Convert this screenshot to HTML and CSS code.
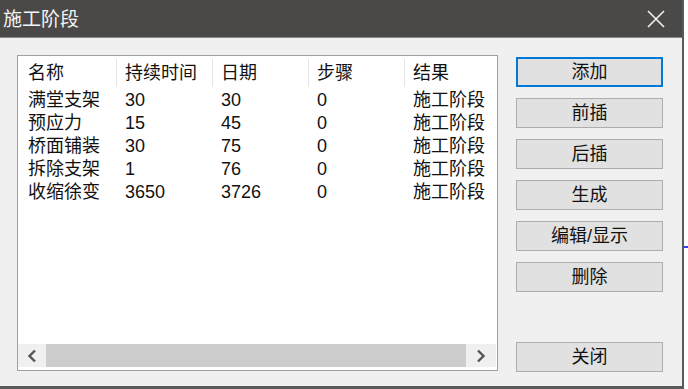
FILE: index.html
```html
<!DOCTYPE html>
<html lang="zh-CN">

<head>
    <meta charset="UTF-8">
    <meta name="viewport" content="width=device-width, initial-scale=1.0">
    <title>施工阶段</title>
    <link rel="stylesheet" href="styles.css">
</head>

<body>
    <div class="screen">
        <div class="dialog">
            <div class="titlebar">
                <span class="title">施工阶段</span>
                <svg class="closeIcon" width="18" height="18" viewBox="0 0 18 18">
                    <path d="M1 1 L17 17 M17 1 L1 17" stroke="#f2f2f2" stroke-width="1.6" fill="none" />
                </svg>
            </div>

            <div class="content">
                <div class="listBox">
                    <div class="row header">
                        <div class="cell">名称</div>
                        <div class="cell">持续时间</div>
                        <div class="cell">日期</div>
                        <div class="cell">步骤</div>
                        <div class="cell">结果</div>
                    </div>
                    <div class="rows">
                        <div class="row">
                            <div class="cell">满堂支架</div>
                            <div class="cell">30</div>
                            <div class="cell">30</div>
                            <div class="cell">0</div>
                            <div class="cell">施工阶段</div>
                        </div>
                        <div class="row">
                            <div class="cell">预应力</div>
                            <div class="cell">15</div>
                            <div class="cell">45</div>
                            <div class="cell">0</div>
                            <div class="cell">施工阶段</div>
                        </div>
                        <div class="row">
                            <div class="cell">桥面铺装</div>
                            <div class="cell">30</div>
                            <div class="cell">75</div>
                            <div class="cell">0</div>
                            <div class="cell">施工阶段</div>
                        </div>
                        <div class="row">
                            <div class="cell">拆除支架</div>
                            <div class="cell">1</div>
                            <div class="cell">76</div>
                            <div class="cell">0</div>
                            <div class="cell">施工阶段</div>
                        </div>
                        <div class="row">
                            <div class="cell">收缩徐变</div>
                            <div class="cell">3650</div>
                            <div class="cell">3726</div>
                            <div class="cell">0</div>
                            <div class="cell">施工阶段</div>
                        </div>
                    </div>

                    <div class="scrollbar">
                        <div class="arrowBtn left">
                            <svg width="10" height="14" viewBox="0 0 10 14">
                                <path d="M8 1.5 L2.5 7 L8 12.5" stroke="#555" stroke-width="2.4" fill="none" />
                            </svg>
                        </div>
                        <div class="track"></div>
                        <div class="arrowBtn right">
                            <svg width="10" height="14" viewBox="0 0 10 14">
                                <path d="M2 1.5 L7.5 7 L2 12.5" stroke="#555" stroke-width="2.4" fill="none" />
                            </svg>
                        </div>
                    </div>
                </div>

                <div class="buttons">
                    <button class="default">添加</button>
                    <button>前插</button>
                    <button>后插</button>
                    <button>生成</button>
                    <button>编辑/显示</button>
                    <button>删除</button>
                    <button class="close">关闭</button>
                </div>
            </div>
        </div>

        <div class="sideStrip">
            <div class="blueLine"></div>
        </div>
    </div>
</body>

</html>
```

FILE: styles.css
```css
* {
    box-sizing: border-box;
    font-family: "Liberation Sans", "Noto Sans CJK SC", sans-serif;
}

body {
    margin: 0;
    background-color: #ffffff;
}

.screen {
    display: flex;
    width: 688px;
    height: 389px;
}

.dialog {
    width: 684px;
    height: 389px;
    display: flex;
    flex-direction: column;
    background-color: #f0f0f0;
    border-right: 2px solid #5a5a5a;
    border-bottom: 3px solid #5a5a5a;
}

.titlebar {
    height: 38px;
    display: flex;
    align-items: center;
    justify-content: space-between;
    padding-left: 3px;
    padding-right: 17px;
    background-color: #4a4947;
    border-bottom: 1px solid #8a8a8a;
}

.title {
    color: #f4f4f4;
    font-size: 19px;
    line-height: 22px;
    padding-top: 2px;
}

.closeIcon {
    margin-top: 1px;
}

.content {
    flex: 1;
    display: flex;
    padding: 17px 19px 14px 17px;
}

.listBox {
    width: 482px;
    height: 316px;
    display: flex;
    flex-direction: column;
    background-color: #ffffff;
    border: 1px solid #a0a0a0;
}

.row {
    display: grid;
    grid-template-columns: 99px 96px 96px 96px 1fr;
    font-size: 18px;
    line-height: 23px;
    color: #111111;
}

.header {
    height: 33px;
    align-items: center;
}

.header .cell {
    border-right: 1px solid #e5e5e5;
    height: 28px;
    line-height: 28px;
    padding-left: 8px;
}

.header .cell:first-child {
    padding-left: 10px;
}

.header .cell:last-child {
    border-right: none;
}

.rows {
    flex: 1;
}

.cell {
    padding-left: 8px;
    white-space: nowrap;
}

.row .cell:first-child {
    padding-left: 10px;
}

.scrollbar {
    height: 23px;
    display: flex;
    margin-right: 1px;
    margin-bottom: 3px;
}

.arrowBtn {
    display: flex;
    align-items: center;
    justify-content: center;
    background-color: #f0f0f0;
}

.arrowBtn.left {
    width: 28px;
}

.arrowBtn.right {
    width: 30px;
}

.track {
    flex: 1;
    background-color: #cdcdcd;
}

.buttons {
    margin-left: 18px;
    width: 147px;
    display: flex;
    flex-direction: column;
    gap: 11px;
    padding-top: 2px;
}

button {
    height: 30px;
    border: 1px solid #adadad;
    background-color: #e1e1e1;
    font-size: 18px;
    line-height: 26px;
    color: #111111;
    padding: 0;
}

button.default {
    border: 2px solid #0078d7;
}

button.close {
    margin-top: auto;
}

.sideStrip {
    flex: 1;
    padding-top: 246px;
}

.blueLine {
    height: 2px;
    background-color: #3a3aff;
}
```
